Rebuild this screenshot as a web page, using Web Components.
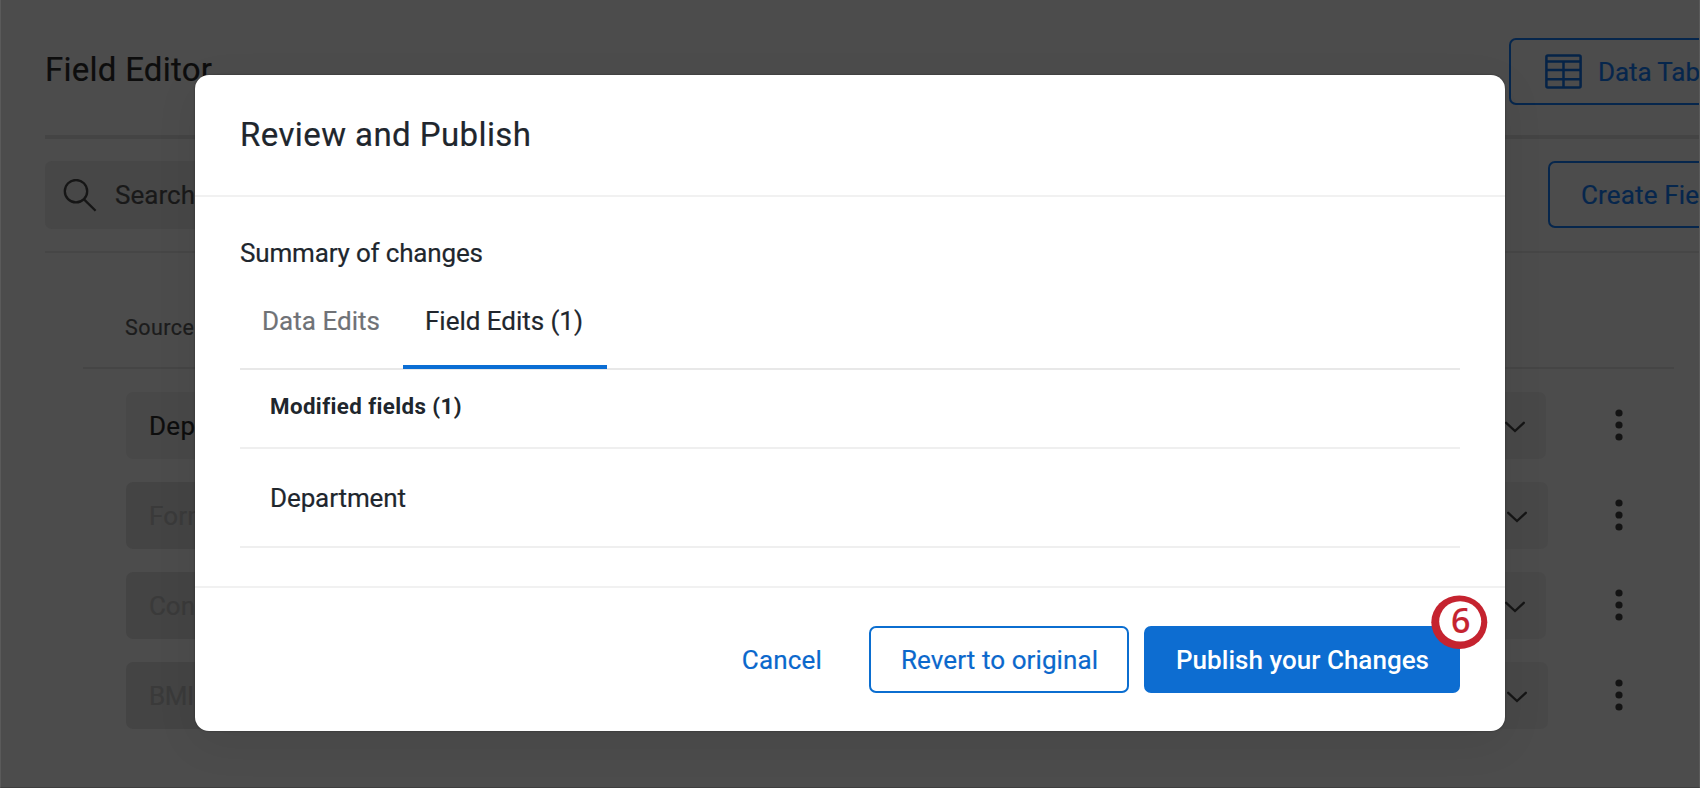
<!DOCTYPE html>
<html lang="en">
<head>
<meta charset="utf-8">
<title>Field Editor</title>
<style>
html,body{margin:0;height:100%;overflow:hidden;background:#4c4c4c}
body{font-family:Roboto,"Liberation Sans",sans-serif}
</style>
</head>
<body>
<field-editor-page></field-editor-page>
<script>
const define=(name,html,setup)=>customElements.define(name,class extends HTMLElement{
  constructor(){super();this.attachShadow({mode:'open'}).innerHTML=html}
  connectedCallback(){if(setup)setup.call(this,this.shadowRoot)}
});

/* Single-line label; "width" tracks the letters out to an exact measure. */
define('ui-text',`<style>:host{display:block;white-space:nowrap;line-height:1.2;-webkit-text-stroke:.2px currentColor}span{display:inline-block}</style><span><slot></slot></span>`,function(root){
  const s=root.querySelector('span'),w=+this.getAttribute('width');
  if(!w)return;
  s.style.letterSpacing=((w-s.getBoundingClientRect().width)/(this.textContent.length-1))+'px';
});

define('ui-button',`<style>
:host{display:flex;box-sizing:border-box;height:67px;align-items:center;padding:2px 30px 0;border:2px solid var(--line,#0b6ed0);border-radius:7px;color:var(--ink,#0b68cc);background:var(--fill,transparent);font-size:26px;flex:none}
</style><slot></slot>`);

define('icon-search',`<style>:host{display:block;width:34px;height:34px;flex:none}svg{display:block}</style>
<svg width="34" height="34" viewBox="0 0 34 34" fill="none" stroke="#161616" stroke-width="2.3"><circle cx="13" cy="12.2" r="11.2"/><path d="M21 20.4L32.6 31.8"/></svg>`);
define('icon-table',`<style>:host{display:block;width:37px;height:35px;flex:none;margin-top:-2px}svg{display:block}</style>
<svg width="37" height="35" viewBox="0 0 37 35" fill="none" stroke="#052347" stroke-width="2.5"><rect x="1.4" y="1.4" width="34.2" height="32.2" rx="1.5"/><path d="M1 7.5H36M1 16H36M1 25.3H36M18.5 7.5V34"/></svg>`);
define('icon-chevron',`<style>:host{display:block;width:20px;height:12px;flex:none}svg{display:block}</style>
<svg width="20" height="12" viewBox="0 0 20 12" fill="none" stroke="#151515" stroke-width="2.3" stroke-linecap="round"><path d="M1.2 1.8L10 10L18.8 1.8"/></svg>`);
define('icon-dots',`<style>:host{display:block;width:8px;height:32px;flex:none;margin-top:-1px}svg{display:block}</style>
<svg width="8" height="32" viewBox="0 0 8 32" fill="#141414"><circle cx="4" cy="4" r="3.6"/><circle cx="4" cy="16" r="3.6"/><circle cx="4" cy="28" r="3.6"/></svg>`);

define('field-row',`<style>
:host{display:flex;align-items:center;height:67px;margin-bottom:23px;font-size:26px;color:var(--ink,#3a3a3a)}
.box{display:flex;align-items:center;justify-content:space-between;box-sizing:border-box;width:var(--w,1420px);height:67px;border-radius:7px;padding:2px 21px 0 23px;background:linear-gradient(90deg,var(--fill,#444) 60%,#484848 60%)}
.more{margin-left:auto;padding-right:76px}
</style><div class="box"><slot></slot><icon-chevron></icon-chevron></div><div class="more"><icon-dots></icon-dots></div>`);

define('review-dialog',`<style>
:host{display:flex;flex-direction:column;box-sizing:border-box;width:1310px;height:656px;background:#fff;border-radius:14px;color:#20262d;box-shadow:0 12px 44px rgba(0,0,0,.07),0 0 2px rgba(0,0,0,.4)}
header{box-sizing:border-box;height:122px;padding:40px 45px 0;border-bottom:2px solid #f1f1f1;font-size:33px}
main{height:389px;padding:0 45px;font-size:26px;display:flex;flex-direction:column}
.sum{box-sizing:border-box;height:104px;padding-top:41px;flex:none}
.tabs{display:flex;height:69px;flex:none;border-bottom:2px solid #e8e8e8;box-sizing:border-box}
.tab{box-sizing:border-box;height:69px;padding:5px 22px 0}
.tab.off{width:163px;color:#6f7276}
.tab.on{width:204px;height:68px;border-bottom:4px solid #0b6ed4}
.row{box-sizing:border-box;display:flex;align-items:center;padding-left:30px;border-bottom:2px solid #efefef;flex:none}
.head{height:79px;font-size:22.3px;font-weight:700;padding-bottom:5px}
.head ui-text{-webkit-text-stroke:0}
.item{height:99px;padding-top:2px}
footer{flex:1;display:flex;align-items:flex-start;justify-content:flex-end;padding:38px 45px 0;border-top:2px solid #f1f1f1}
.cancel{--line:transparent;margin-right:15px}
.revert{width:260px;box-sizing:border-box;margin-right:15px}
.wrap{position:relative}
.pub{width:316px;box-sizing:border-box;--fill:#0d6dd1;--ink:#fff;--line:#0d6dd1;font-weight:500}
.pub ui-text{-webkit-text-stroke:0}
.badge{position:absolute;left:287px;top:-31px;width:57px;height:55px;}
.badge svg{display:block}
.badge ui-text{position:absolute;left:20px;top:5px;font:500 34px/40px "Noto Sans","Open Sans",sans-serif;color:#c5232f}
</style>
<header><ui-text width="291">Review and Publish</ui-text></header>
<main>
<div class="sum"><ui-text width="243">Summary of changes</ui-text></div>
<div class="tabs"><div class="tab off"><ui-text width="118">Data Edits</ui-text></div><div class="tab on"><ui-text width="158">Field Edits (1)</ui-text></div></div>
<div class="row head"><ui-text width="191">Modified fields (1)</ui-text></div>
<div class="row item"><ui-text width="136">Department</ui-text></div>
</main>
<footer>
<ui-button class="cancel"><ui-text width="80">Cancel</ui-text></ui-button>
<ui-button class="revert"><ui-text width="197">Revert to original</ui-text></ui-button>
<div class="wrap"><ui-button class="pub"><ui-text width="253">Publish your Changes</ui-text></ui-button>
<div class="badge"><svg width="57" height="55" viewBox="0 0 57 55"><ellipse cx="28.3" cy="27.3" rx="28" ry="26.8" fill="#c5232f"/><ellipse cx="29.2" cy="26.4" rx="21" ry="20.2" fill="#fff"/></svg><ui-text>6</ui-text></div></div>
</footer>`);

define('field-editor-page',`<style>
:host{display:block;position:relative;box-sizing:border-box;width:1700px;height:788px;overflow:hidden;background:#4c4c4c;border-left:1px solid #5a5a5a;border-right:1px solid #5a5a5a;border-bottom:1px solid #3e3e3e;color:#0d0d0d}
.top{box-sizing:border-box;display:flex;justify-content:space-between;height:139px;margin-left:44px;border-bottom:4px solid #444;padding-top:38px}
.title{font-size:33px;padding-top:12px}
.act{display:flex;width:190px;--line:#06264c;--ink:#06264c}
.act ui-button{width:300px;box-sizing:border-box}
.data{gap:16px;padding-left:34px}
.tools{box-sizing:border-box;display:flex;justify-content:space-between;height:114px;margin-left:44px;padding-top:22px;border-bottom:2px solid #464646}
.search{display:flex;align-items:center;gap:18px;box-sizing:border-box;width:700px;height:68px;padding:1px 0 0 18px;border-radius:7px;background:#474747;color:#191919;font-size:26px}
.create{width:151px}
.create ui-button{padding-left:31px}
.cols{box-sizing:border-box;height:116px;margin:0 25px 0 82px;padding:62px 0 0 42px;border-bottom:2px solid #454545;color:#1c1c1c;font-size:21.5px}
.rows{padding:23px 0 0 125px}
.normal{--fill:#484848;--ink:#0d0d0d}
.wide{--w:1422px}
review-dialog{position:absolute;left:194px;top:75px}
</style>
<div class="top"><div class="title"><ui-text width="167">Field Editor</ui-text></div><div class="act"><ui-button class="data"><icon-table></icon-table><ui-text width="102">Data Tab</ui-text></ui-button></div></div>
<div class="tools"><div class="search"><icon-search></icon-search><ui-text width="80">Search</ui-text></div><div class="act create"><ui-button><ui-text width="118">Create Fie</ui-text></ui-button></div></div>
<div class="cols"><ui-text width="69">Source</ui-text></div>
<div class="rows">
<field-row class="normal"><ui-text width="46">Dep</ui-text></field-row>
<field-row class="wide"><ui-text width="61">Form</ui-text></field-row>
<field-row><ui-text width="46">Con</ui-text></field-row>
<field-row class="wide"><ui-text width="45">BMI</ui-text></field-row>
</div>
<review-dialog></review-dialog>`);
</script>
</body>
</html>
